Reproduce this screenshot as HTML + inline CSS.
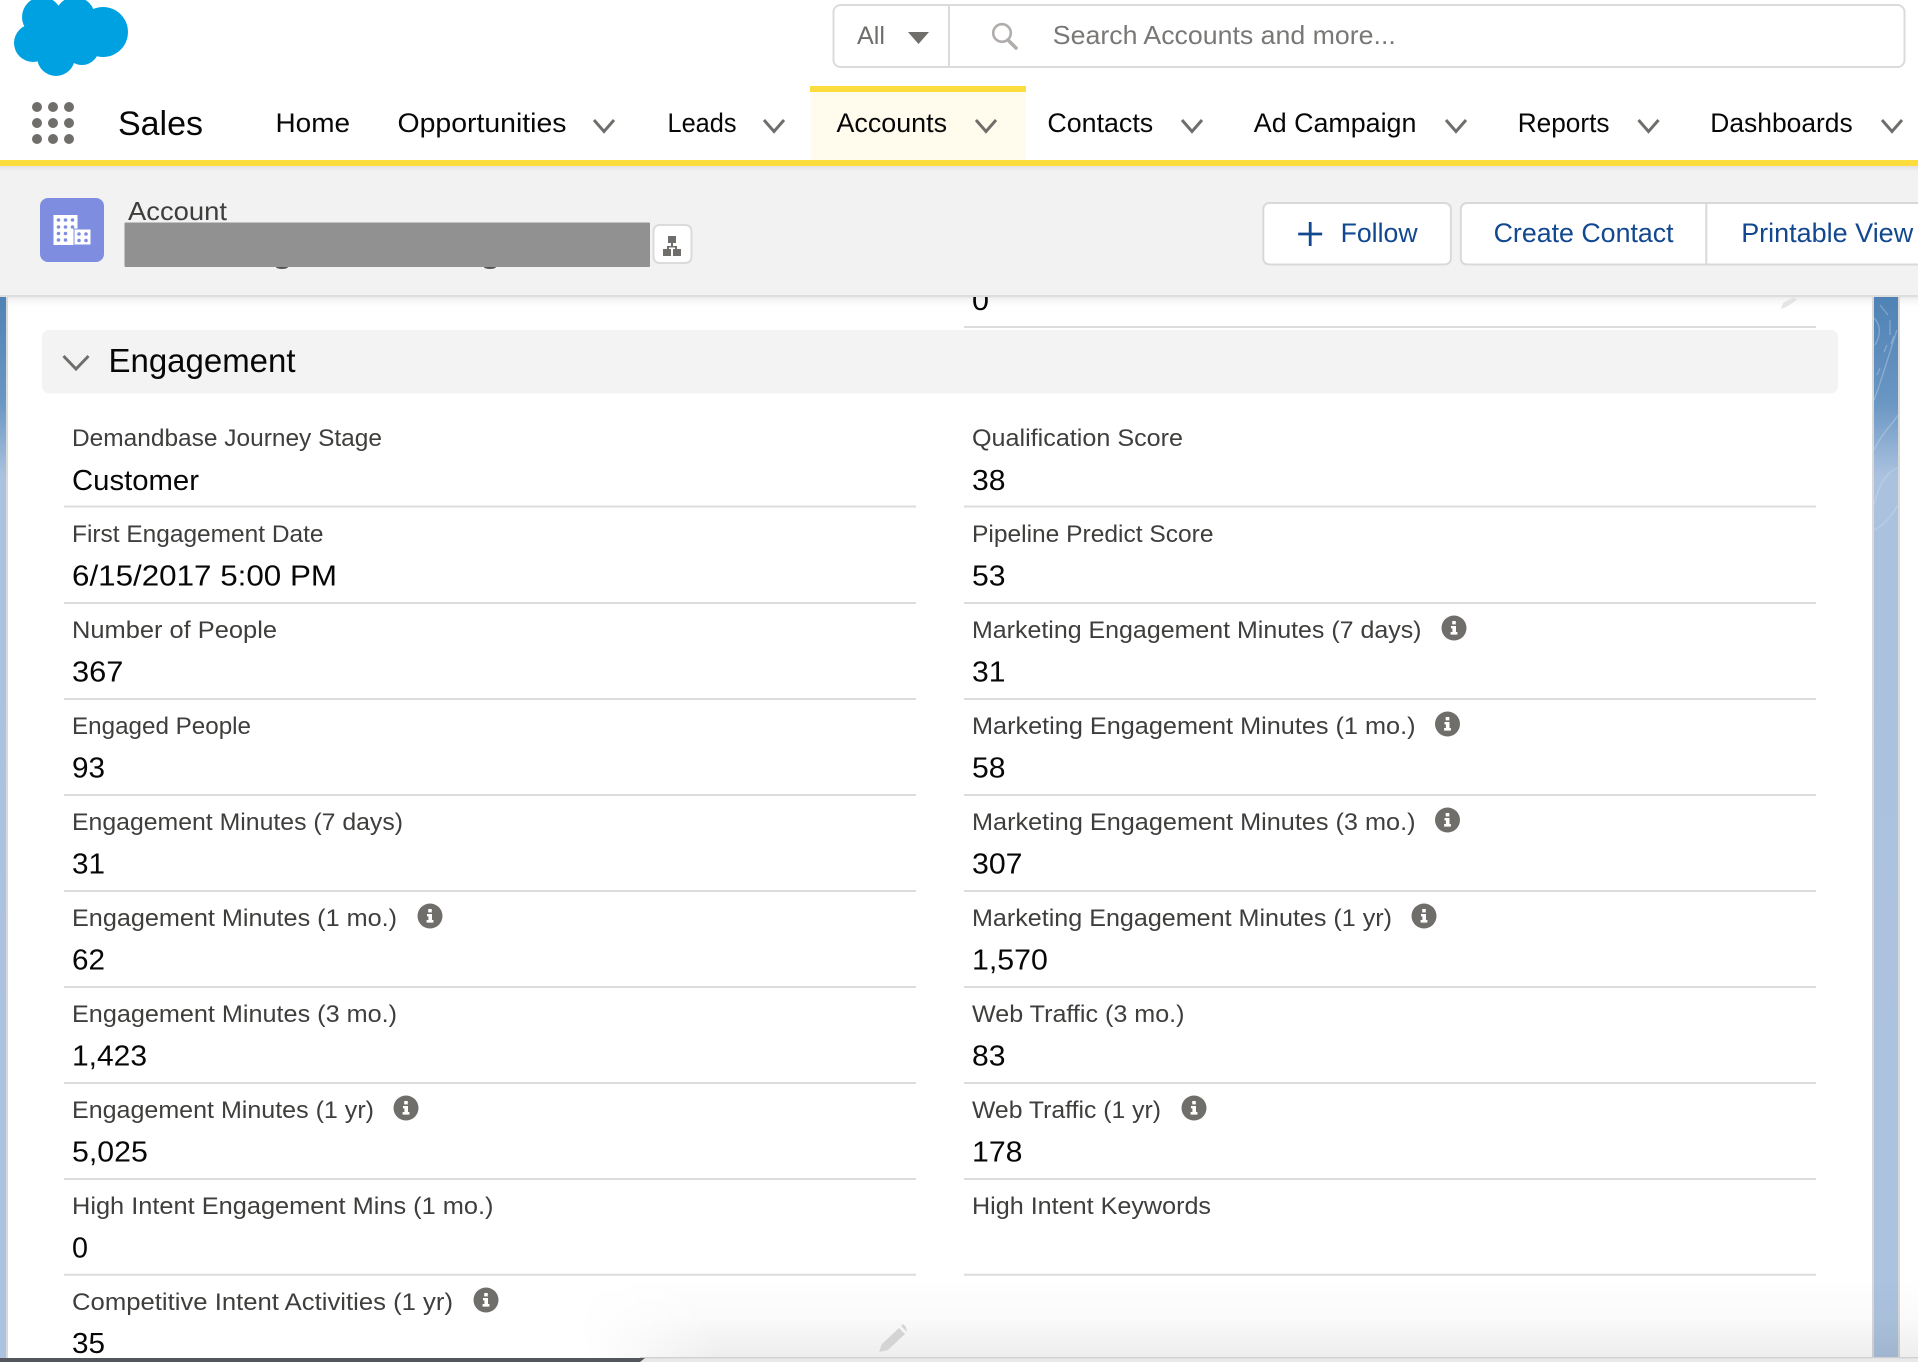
<!DOCTYPE html>
<html lang="en">
<head>
<meta charset="utf-8">
<title>Account - Engagement</title>
<style>
html,body{margin:0;padding:0;background:#fff;width:1918px;height:1362px;overflow:hidden}
svg{display:block}
text{font-family:"Liberation Sans",sans-serif}
.l{font-size:24.5px;fill:#3e3e3c}
.v{font-size:28.5px;fill:#080707}
.n{font-size:27px;fill:#080707}
.b{font-size:27px;fill:#12488f}
.c{fill:none;stroke:#706e6b;stroke-width:3}
.d{stroke:#dcdcdc;stroke-width:2}
</style>
</head>
<body>
<svg width="1918" height="1362" viewBox="0 0 1918 1362" xmlns="http://www.w3.org/2000/svg">
<defs>
<linearGradient id="bg" gradientUnits="userSpaceOnUse" x1="0" y1="296" x2="0" y2="1358"><stop offset="0" stop-color="#4f82b5"/><stop offset="0.1" stop-color="#6a96c3"/><stop offset="0.17" stop-color="#abc2df"/><stop offset="1" stop-color="#acc3df"/></linearGradient>
<linearGradient id="hs" x1="0" y1="0" x2="0" y2="1"><stop offset="0" stop-color="#e6e6e6"/><stop offset="0.35" stop-color="#f5f5f5"/><stop offset="1" stop-color="#ffffff"/></linearGradient>
<linearGradient id="ns" x1="0" y1="0" x2="0" y2="1"><stop offset="0" stop-color="#e2e2e2"/><stop offset="1" stop-color="#f2f2f2"/></linearGradient>
<linearGradient id="bot" gradientUnits="userSpaceOnUse" x1="0" y1="1278" x2="0" y2="1358"><stop offset="0" stop-color="#000" stop-opacity="0"/><stop offset="0.5" stop-color="#000" stop-opacity="0.02"/><stop offset="1" stop-color="#000" stop-opacity="0.07"/></linearGradient>
<linearGradient id="fade" gradientUnits="userSpaceOnUse" x1="585" y1="1350" x2="705" y2="1310"><stop offset="0" stop-color="#000"/><stop offset="1" stop-color="#fff"/></linearGradient>
<mask id="mk" maskUnits="userSpaceOnUse" x="0" y="1270" width="1918" height="92"><rect x="0" y="1270" width="1918" height="92" fill="url(#fade)"/></mask>
<g id="i"><circle cx="0" cy="0" r="12.5" fill="#706e6b"/><rect x="-1.8" y="-7" width="3.6" height="3.4" fill="#fff"/><path d="M-3-2H2V4H3.4V6.6H-3.4V4H-1.6V.4H-3Z" fill="#fff"/></g>
</defs>

<rect width="1918" height="1362" fill="#fff"/>

<!-- header shadow -->
<rect x="0" y="296" width="1918" height="11" fill="url(#hs)"/>

<!-- side strips -->
<rect x="0" y="296" width="8" height="1062" fill="#d9d9d9"/>
<rect x="0" y="296" width="6" height="1062" fill="url(#bg)"/>
<rect x="1872" y="296" width="28" height="1062" fill="#d9d9d9"/>
<rect x="1874" y="296" width="24" height="1062" fill="url(#bg)"/>
<g fill="none" stroke="#d5e4f2" stroke-opacity=".35" stroke-width="1.3">
<path d="M1874 400C1882 380 1890 350 1897 330M1874 450C1884 430 1892 425 1898 415M1874 505C1880 480 1890 470 1898 468M1874 530C1885 525 1892 515 1898 505M1880 305L1888 315M1874 318C1881 325 1881 335 1875 345M1890 320V335M1887 345L1884 352M1880 368L1877 375M1894 336L1891 344"/>
</g>

<!-- top value under header -->
<text x="972" y="310" class="v" textLength="17" lengthAdjust="spacingAndGlyphs">0</text>
<line x1="964" y1="327" x2="1816" y2="327" class="d"/>
<path d="M1781 309L1783 303L1794 297L1797 300L1786 307Z" fill="#e4e4e4"/>

<!-- section header -->
<rect x="42" y="330" width="1796" height="63.5" rx="7" fill="#f3f3f3"/>
<path d="M63.5 356L76 369L88.5 356" class="c" stroke-width="3.2"/>
<text x="108.5" y="372" font-size="33" fill="#080707" textLength="187" lengthAdjust="spacingAndGlyphs">Engagement</text>

<!-- dividers -->
<g class="d">
<line x1="64" x2="916" y1="506.5" y2="506.5"/><line x1="964" x2="1816" y1="506.5" y2="506.5"/>
<line x1="64" x2="916" y1="603" y2="603"/><line x1="964" x2="1816" y1="603" y2="603"/>
<line x1="64" x2="916" y1="699" y2="699"/><line x1="964" x2="1816" y1="699" y2="699"/>
<line x1="64" x2="916" y1="795" y2="795"/><line x1="964" x2="1816" y1="795" y2="795"/>
<line x1="64" x2="916" y1="891" y2="891"/><line x1="964" x2="1816" y1="891" y2="891"/>
<line x1="64" x2="916" y1="987" y2="987"/><line x1="964" x2="1816" y1="987" y2="987"/>
<line x1="64" x2="916" y1="1083" y2="1083"/><line x1="964" x2="1816" y1="1083" y2="1083"/>
<line x1="64" x2="916" y1="1179" y2="1179"/><line x1="964" x2="1816" y1="1179" y2="1179"/>
<line x1="64" x2="916" y1="1274.7" y2="1274.7"/><line x1="964" x2="1816" y1="1274.7" y2="1274.7"/>
</g>

<!-- left column -->
<text x="72" y="446" class="l" textLength="310" lengthAdjust="spacingAndGlyphs">Demandbase Journey Stage</text>
<text x="72" y="490" class="v" textLength="127" lengthAdjust="spacingAndGlyphs">Customer</text>
<text x="72" y="542" class="l" textLength="251.500" lengthAdjust="spacingAndGlyphs">First Engagement Date</text>
<text x="72" y="585.500" class="v" textLength="265" lengthAdjust="spacingAndGlyphs">6/15/2017 5:00 PM</text>
<text x="72" y="638" class="l" textLength="205" lengthAdjust="spacingAndGlyphs">Number of People</text>
<text x="72" y="681.500" class="v" textLength="51.400" lengthAdjust="spacingAndGlyphs">367</text>
<text x="72" y="734" class="l" textLength="179" lengthAdjust="spacingAndGlyphs">Engaged People</text>
<text x="72" y="777.500" class="v" textLength="33" lengthAdjust="spacingAndGlyphs">93</text>
<text x="72" y="830" class="l" textLength="331" lengthAdjust="spacingAndGlyphs">Engagement Minutes (7 days)</text>
<text x="72" y="873.500" class="v" textLength="33" lengthAdjust="spacingAndGlyphs">31</text>
<text x="72" y="926" class="l" textLength="325" lengthAdjust="spacingAndGlyphs">Engagement Minutes (1 mo.)</text>
<use href="#i" x="430" y="916"/>
<text x="72" y="969.500" class="v" textLength="33" lengthAdjust="spacingAndGlyphs">62</text>
<text x="72" y="1022" class="l" textLength="325" lengthAdjust="spacingAndGlyphs">Engagement Minutes (3 mo.)</text>
<text x="72" y="1065.500" class="v" textLength="75" lengthAdjust="spacingAndGlyphs">1,423</text>
<text x="72" y="1118" class="l" textLength="302" lengthAdjust="spacingAndGlyphs">Engagement Minutes (1 yr)</text>
<use href="#i" x="406" y="1108"/>
<text x="72" y="1161.500" class="v" textLength="75.800" lengthAdjust="spacingAndGlyphs">5,025</text>
<text x="72" y="1214" class="l" textLength="421.500" lengthAdjust="spacingAndGlyphs">High Intent Engagement Mins (1 mo.)</text>
<text x="72" y="1257.500" class="v" textLength="16" lengthAdjust="spacingAndGlyphs">0</text>
<text x="72" y="1310" class="l" textLength="381" lengthAdjust="spacingAndGlyphs">Competitive Intent Activities (1 yr)</text>
<use href="#i" x="486" y="1300"/>
<text x="72" y="1353" class="v" textLength="33" lengthAdjust="spacingAndGlyphs">35</text>

<!-- right column -->
<text x="972" y="446" class="l" textLength="211" lengthAdjust="spacingAndGlyphs">Qualification Score</text>
<text x="972" y="490" class="v" textLength="33.500" lengthAdjust="spacingAndGlyphs">38</text>
<text x="972" y="542" class="l" textLength="241.500" lengthAdjust="spacingAndGlyphs">Pipeline Predict Score</text>
<text x="972" y="585.500" class="v" textLength="33.500" lengthAdjust="spacingAndGlyphs">53</text>
<text x="972" y="638" class="l" textLength="449.500" lengthAdjust="spacingAndGlyphs">Marketing Engagement Minutes (7 days)</text>
<use href="#i" x="1454" y="628"/>
<text x="972" y="681.500" class="v" textLength="33.500" lengthAdjust="spacingAndGlyphs">31</text>
<text x="972" y="734" class="l" textLength="443.500" lengthAdjust="spacingAndGlyphs">Marketing Engagement Minutes (1 mo.)</text>
<use href="#i" x="1447.500" y="724"/>
<text x="972" y="777.500" class="v" textLength="33.500" lengthAdjust="spacingAndGlyphs">58</text>
<text x="972" y="830" class="l" textLength="443.500" lengthAdjust="spacingAndGlyphs">Marketing Engagement Minutes (3 mo.)</text>
<use href="#i" x="1447.500" y="820"/>
<text x="972" y="873.500" class="v" textLength="50.500" lengthAdjust="spacingAndGlyphs">307</text>
<text x="972" y="926" class="l" textLength="420" lengthAdjust="spacingAndGlyphs">Marketing Engagement Minutes (1 yr)</text>
<use href="#i" x="1424" y="916"/>
<text x="972" y="969.500" class="v" textLength="75.800" lengthAdjust="spacingAndGlyphs">1,570</text>
<text x="972" y="1022" class="l" textLength="212.500" lengthAdjust="spacingAndGlyphs">Web Traffic (3 mo.)</text>
<text x="972" y="1065.500" class="v" textLength="33.500" lengthAdjust="spacingAndGlyphs">83</text>
<text x="972" y="1118" class="l" textLength="189" lengthAdjust="spacingAndGlyphs">Web Traffic (1 yr)</text>
<use href="#i" x="1194" y="1108"/>
<text x="972" y="1161.500" class="v" textLength="50.500" lengthAdjust="spacingAndGlyphs">178</text>
<text x="972" y="1214" class="l" textLength="239" lengthAdjust="spacingAndGlyphs">High Intent Keywords</text>

<!-- bottom gradient and pencil -->
<rect x="500" y="1278" width="1418" height="80" fill="url(#bot)" mask="url(#mk)"/>
<path d="M879 1352L882 1344L899 1328L905 1334L888 1350Z" fill="#d4d4d4"/>
<path d="M901 1326L903 1324L906 1327L907 1332L905 1330Z" fill="#d4d4d4"/>
<rect x="640" y="1358" width="1278" height="4" fill="#e9e9e9"/>
<rect x="640" y="1357" width="1278" height="1.300" fill="#d0d0d0"/>
<path d="M0 1358H645L640 1362H0Z" fill="#54565e"/>

<!-- page header gray -->
<rect x="0" y="166" width="1918" height="130" fill="#f2f2f2"/>
<rect x="0" y="166" width="1918" height="5" fill="url(#ns)"/>
<rect x="0" y="295" width="1918" height="2" fill="#dedede"/>

<!-- top bar -->
<rect x="0" y="0" width="1918" height="160" fill="#fff"/>
<rect x="811" y="92" width="214.500" height="68" fill="#fffcee"/>
<rect x="810" y="86" width="216" height="6" fill="#fcdd3d"/>
<rect x="0" y="160" width="1918" height="6" fill="#fcdd3d"/>

<!-- cloud -->
<g fill="#00a1e0">
<circle cx="103" cy="32" r="25"/><circle cx="56" cy="57" r="19"/><circle cx="33" cy="43" r="19"/>
<circle cx="42" cy="17" r="20"/><circle cx="75" cy="17" r="20"/><circle cx="82" cy="48" r="17"/>
<rect x="35" y="15" width="65" height="35"/>
</g>

<!-- search -->
<rect x="833.500" y="5" width="1071" height="62" rx="7" fill="#fff" stroke="#dddbda" stroke-width="2"/>
<line x1="949" y1="5" x2="949" y2="67" stroke="#dddbda" stroke-width="2"/>
<text x="857" y="44" font-size="25" fill="#706e6b" textLength="28" lengthAdjust="spacingAndGlyphs">All</text>
<path d="M908 32H929L918.500 44Z" fill="#706e6b"/>
<circle cx="1002" cy="33" r="8.800" fill="none" stroke="#b0adab" stroke-width="2.600"/>
<path d="M1008 40L1016 48" stroke="#b0adab" stroke-width="3.600" stroke-linecap="round"/>
<text x="1052.800" y="44" font-size="26" fill="#7a7876" textLength="343" lengthAdjust="spacingAndGlyphs">Search Accounts and more...</text>

<!-- waffle -->
<g fill="#706e6b">
<circle cx="37" cy="107" r="5"/><circle cx="53" cy="107" r="5"/><circle cx="69" cy="107" r="5"/>
<circle cx="37" cy="123" r="5"/><circle cx="53" cy="123" r="5"/><circle cx="69" cy="123" r="5"/>
<circle cx="37" cy="139" r="5"/><circle cx="53" cy="139" r="5"/><circle cx="69" cy="139" r="5"/>
</g>
<text x="118" y="135" font-size="34" fill="#080707" textLength="85" lengthAdjust="spacingAndGlyphs">Sales</text>

<!-- nav -->
<text x="275.500" y="132" class="n" textLength="74.500" lengthAdjust="spacingAndGlyphs">Home</text>
<text x="397.500" y="132" class="n" textLength="169" lengthAdjust="spacingAndGlyphs">Opportunities</text>
<text x="667.500" y="132" class="n" textLength="69" lengthAdjust="spacingAndGlyphs">Leads</text>
<text x="836.500" y="132" class="n" textLength="110.500" lengthAdjust="spacingAndGlyphs">Accounts</text>
<text x="1047.400" y="132" class="n" textLength="105.800" lengthAdjust="spacingAndGlyphs">Contacts</text>
<text x="1253.800" y="132" class="n" textLength="162.600" lengthAdjust="spacingAndGlyphs">Ad Campaign</text>
<text x="1517.700" y="132" class="n" textLength="91.800" lengthAdjust="spacingAndGlyphs">Reports</text>
<text x="1710.300" y="132" class="n" textLength="142.400" lengthAdjust="spacingAndGlyphs">Dashboards</text>
<g class="c">
<path d="M594 120L604 131.500L614 120"/>
<path d="M764 120L774 131.500L784 120"/>
<path d="M976 120L986 131.500L996 120"/>
<path d="M1182 120L1192 131.500L1202 120"/>
<path d="M1446 120L1456 131.500L1466 120"/>
<path d="M1638.500 120L1648.500 131.500L1658.500 120"/>
<path d="M1882 120L1892 131.500L1902 120"/>
</g>

<!-- account icon -->
<rect x="40" y="198" width="64" height="64" rx="8" fill="#7f8de1"/>
<path d="M53.500 215H77.500V245H53.500Z" fill="#fff"/>
<rect x="74" y="229" width="17" height="16" fill="#fff" stroke="#7f8de1" stroke-width="1"/>
<g fill="#7f8de1">
<circle cx="58.500" cy="220" r="1.800"/><circle cx="65.500" cy="220" r="1.800"/><circle cx="72.500" cy="220" r="1.800"/>
<circle cx="58.500" cy="227" r="1.800"/><circle cx="65.500" cy="227" r="1.800"/><circle cx="72.500" cy="227" r="1.800"/>
<circle cx="58.500" cy="233.500" r="1.800"/><circle cx="65.500" cy="233.500" r="1.800"/>
<circle cx="58.500" cy="240" r="1.800"/><circle cx="65.500" cy="240" r="1.800"/>
<circle cx="79" cy="234" r="1.800"/><circle cx="86" cy="234" r="1.800"/>
<circle cx="79" cy="240.500" r="1.800"/><circle cx="86" cy="240.500" r="1.800"/>
</g>
<text x="128" y="220" font-size="26" fill="#3e3e3c" textLength="99" lengthAdjust="spacingAndGlyphs">Account</text>
<ellipse cx="282" cy="267" rx="6" ry="2" fill="#555"/><ellipse cx="490" cy="267" rx="6" ry="2" fill="#555"/>
<rect x="124.500" y="222.500" width="525.500" height="44.500" rx="1" fill="#919191"/>

<!-- hierarchy button -->
<rect x="653.500" y="225" width="38" height="38" rx="6" fill="#fff" stroke="#dddbda" stroke-width="2"/>
<g fill="#706e6b">
<rect x="668" y="236" width="8" height="7"/>
<rect x="663" y="249" width="8" height="7"/><rect x="673" y="249" width="8" height="7"/>
<path d="M671 243H673V246H677V249H675V247.500H669V249H667V246H671Z"/>
</g>

<!-- buttons -->
<rect x="1263.300" y="203" width="187.600" height="61.500" rx="6" fill="#fff" stroke="#dbd9d7" stroke-width="2"/>
<path d="M1310.200 222V246M1298.200 234H1322.200" stroke="#12488f" stroke-width="2.800" fill="none"/>
<text x="1340.600" y="242" class="b" textLength="77" lengthAdjust="spacingAndGlyphs">Follow</text>
<path d="M1930 203H1466.800a6 6 0 0 0-6 6V258.500a6 6 0 0 0 6 6H1930Z" fill="#fff" stroke="#dbd9d7" stroke-width="2"/>
<line x1="1706.300" y1="203" x2="1706.300" y2="264" stroke="#dbd9d7" stroke-width="2"/>
<text x="1493.600" y="242" class="b" textLength="180" lengthAdjust="spacingAndGlyphs">Create Contact</text>
<text x="1741.200" y="242" class="b" textLength="172" lengthAdjust="spacingAndGlyphs">Printable View</text>
</svg>
</body>
</html>
